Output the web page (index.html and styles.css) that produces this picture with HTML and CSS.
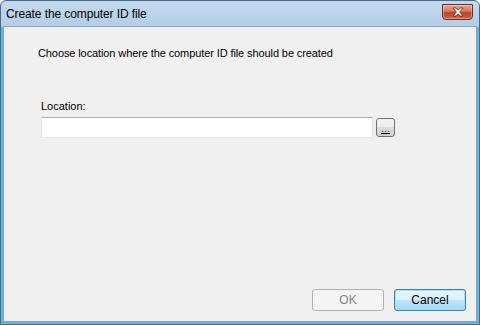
FILE: index.html
```html
<!DOCTYPE html>
<html>
<head>
<meta charset="utf-8">
<link rel="stylesheet" href="styles.css">
</head>
<body>
<div class="window">
  <div class="titlebar">
    <span class="title">Create the computer ID file</span>
    <button class="close" aria-label="Close">
      <svg width="14" height="10" viewBox="0 0 14 10"><path d="M2 1 L5 1 L7 3.2 L9 1 L12 1 L8.6 5 L12 9 L9 9 L7 6.8 L5 9 L2 9 L5.4 5 Z" fill="#fff" stroke="#5a2418" stroke-width="0.8" stroke-linejoin="round"/></svg>
    </button>
  </div>
  <div class="client">
    <p class="intro">Choose location where the computer ID file should be created</p>
    <label class="label">Location:</label>
    <div class="row">
      <div class="input"></div>
      <button class="browse"><span class="dots">...</span></button>
    </div>
    <div class="spacer"></div>
    <div class="buttons">
      <button class="btn disabled">OK</button>
      <button class="btn default">Cancel</button>
    </div>
  </div>
</div>
</body>
</html>
```
FILE: styles.css
```css
html, body { margin: 0; padding: 0; }
body { width: 480px; height: 325px; overflow: hidden; font-family: "Liberation Sans", Arial, sans-serif; font-size: 11px; color: #000; }
.window {
  box-sizing: border-box;
  width: 480px; height: 325px;
  display: flex; flex-direction: column;
  border: 1px solid #4b6a8a;
  border-radius: 6px 6px 0 0;
  padding: 0 2px 2px 2px;
  background: linear-gradient(#c3d9ee, #b4cde6 26px, #5cb6e0 26px);
}
.titlebar {
  height: 25px; display: flex; align-items: center; justify-content: space-between;
  padding: 0 0 0 3px;
}
.title { font-size: 12px; color: #000; letter-spacing: -0.1px; }
.close {
  width: 31px; height: 16px; margin: -4px 4px 0 0; padding: 0;
  border: 1px solid #6b2c23; border-radius: 0 0 4px 4px;
  background: linear-gradient(#e6a698, #d2765f 45%, #bf3f26 55%, #d0674d);
  display: flex; align-items: center; justify-content: center;
  box-shadow: inset 0 0 0 1px rgba(255,255,255,0.35);
}
.client {
  flex: 1; background: #f0f0f0;
  border: 1px solid #8aa3bd;
  display: flex; flex-direction: column;
  padding: 18px 10px 10px 34px;
}
.intro { margin: 0; line-height: 16px; letter-spacing: -0.1px; }
.label { margin-top: 37px; margin-left: 3px; line-height: 16px; }
.row { display: flex; align-items: center; margin-top: 3px; margin-left: 3px; gap: 3px; }
.input {
  box-sizing: border-box; width: 332px; height: 21px;
  background: #fff; border: 1px solid #abadb3; border-color: #abadb3 #e2e3ea #e3e9ef #e2e3ea;
}
.browse {
  box-sizing: border-box; width: 19px; height: 19px; padding: 0;
  border: 1px solid #707070; border-radius: 3px;
  background: linear-gradient(#f2f2f2, #ebebeb 50%, #dddddd 50%, #cfcfcf);
  font-family: "Liberation Sans", sans-serif; font-size: 11px; line-height: 10px;
  display: flex; align-items: flex-end; justify-content: center;
}
.dots { color: #1b3d80; padding-bottom: 3px; text-decoration: underline; text-decoration-color: #000; }
.spacer { flex: 1; }
.buttons { display: flex; justify-content: flex-end; gap: 10px; }
.btn {
  box-sizing: border-box; width: 72px; height: 22px; padding: 0;
  font-family: "Liberation Sans", sans-serif; font-size: 12px;
  border-radius: 3px;
}
.btn.disabled { color: #838383; border: 1px solid #adb2b5; background: #f4f4f4; }
.btn.default {
  color: #000; border: 1px solid #3c7fb1;
  background: linear-gradient(#eaf6fd, #d9f0fc 50%, #bee6fd 50%, #a7d9f5);
  box-shadow: inset 0 0 0 1px #9fe4fb;
}
```
